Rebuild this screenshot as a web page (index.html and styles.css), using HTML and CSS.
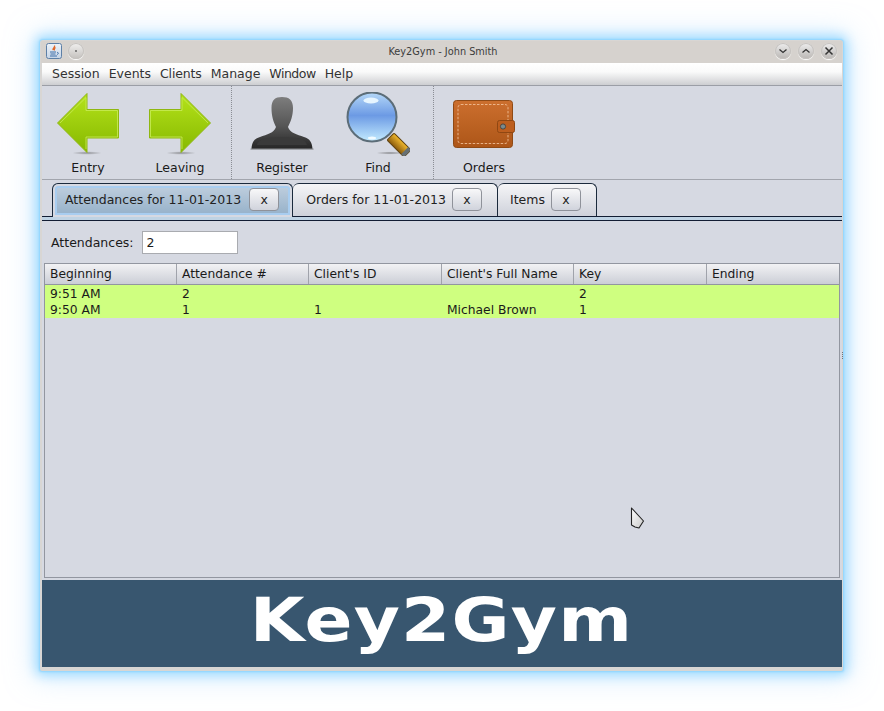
FILE: index.html
```html
<!DOCTYPE html>
<html lang="en">
<head>
<meta charset="utf-8">
<title>Key2Gym - John Smith</title>
<link rel="stylesheet" href="styles.css">
</head>
<body>
<div class="window">
  <header class="titlebar">
    <div class="title-left">
      <svg class="java" viewBox="0 0 16 16" width="16" height="16">
        <defs><linearGradient id="jbg" x1="0" y1="0" x2="0" y2="1"><stop offset="0" stop-color="#eef3f9"/><stop offset="1" stop-color="#c5d4e6"/></linearGradient></defs>
        <rect x="0.5" y="0.5" width="15" height="15" rx="2" fill="url(#jbg)" stroke="#5d7fa6"/>
        <path d="M8.5 2.5c1 1.5-2 2.5-1.500 4.500M9.500 4.500c-1.500 1-1.500 2-1 3" fill="none" stroke="#e0672a" stroke-width="1.300"/>
        <path d="M4 9h6M4.500 11h5M4 13h7M11 9.500c1.500-.5 2 1.500 0 2" fill="none" stroke="#3f6ea8" stroke-width="1"/>
      </svg>
      <span class="orb orb-small"><span class="dot"></span></span>
    </div>
    <div class="title-text">Key2Gym - John Smith</div>
    <div class="title-right">
      <span class="orb"><svg viewBox="0 0 16 16" width="16" height="16"><path d="M4.500 6.500 8 9.500l3.500-3" fill="none" stroke="#333" stroke-width="1.300"/></svg></span>
      <span class="orb"><svg viewBox="0 0 16 16" width="16" height="16"><path d="M4.500 9.500 8 6.500l3.500 3" fill="none" stroke="#333" stroke-width="1.300"/></svg></span>
      <span class="orb"><svg viewBox="0 0 16 16" width="16" height="16"><path d="M4.500 4.500l7 7M11.500 4.500l-7 7" fill="none" stroke="#333" stroke-width="1.500"/></svg></span>
    </div>
  </header>

  <nav class="menubar">
    <span>Session</span><span>Events</span><span class="snug">Clients</span><span>Manage</span><span class="tight">Window</span><span>Help</span>
  </nav>

  <div class="toolbar">
    <div class="tool">
      <svg viewBox="0 0 64 64" width="64" height="64">
        <defs>
          <linearGradient id="ga" x1="0" y1="0" x2="0" y2="1"><stop offset="0" stop-color="#b5e31a"/><stop offset="1" stop-color="#86b800"/></linearGradient>
          <radialGradient id="sh"><stop offset="0" stop-color="#555" stop-opacity=".55"/><stop offset="1" stop-color="#555" stop-opacity="0"/></radialGradient>
        </defs>
        <ellipse cx="31" cy="61" rx="15" ry="1.800" fill="url(#sh)"/>
        <path d="M1.500 31 31 1.500V17.500H62.500V46H31V60.500Z" fill="url(#ga)" stroke="#8fb711"/>
        <path d="M4 31 30 5.500V18.500H61.500V45H30V57" fill="none" stroke="#c9ec5a" stroke-width=".8"/>
      </svg>
      <span>Entry</span>
    </div>
    <div class="tool">
      <svg viewBox="0 0 64 64" width="64" height="64">
        <defs><linearGradient id="gb" x1="0" y1="0" x2="0" y2="1"><stop offset="0" stop-color="#b5e31a"/><stop offset="1" stop-color="#86b800"/></linearGradient>
        <radialGradient id="sh2"><stop offset="0" stop-color="#555" stop-opacity=".55"/><stop offset="1" stop-color="#555" stop-opacity="0"/></radialGradient></defs>
        <ellipse cx="33" cy="61" rx="15" ry="1.800" fill="url(#sh2)"/>
        <path d="M62.500 31 33 1.500V17.500H1.500V46H33V60.500Z" fill="url(#gb)" stroke="#8fb711"/>
        <path d="M60 31 34 5.500V18.500H2.500V45H34V57" fill="none" stroke="#c9ec5a" stroke-width=".8"/>
      </svg>
      <span>Leaving</span>
    </div>
    <div class="sep sep-a"></div>
    <div class="tool">
      <svg viewBox="0 0 64 64" width="64" height="64">
        <defs><linearGradient id="gp" x1="0" y1="0" x2="0" y2="1"><stop offset="0" stop-color="#7d7d7d"/><stop offset=".55" stop-color="#565656"/><stop offset="1" stop-color="#262626"/></linearGradient></defs>
        <path d="M1.500 57C2 50 4 47 10 45 17 42.500 24 41 26 35 23.500 30 21.500 24 21.500 16 21.500 8 25 5 32 5s11 3 11 11C43 24 40.500 30 38 35 40 41 47 42.500 54 45 60 47 62 50 62.500 57Z" fill="url(#gp)"/>
        <path d="M7 53C8 49 12 47 17 46 24 45 40 45 47 46 52 47 56 49 57 53Z" fill="#3a3a3a"/>
        <rect x="0.500" y="56.500" width="63" height="1.200" fill="#8b8d92"/>
      </svg>
      <span>Register</span>
    </div>
    <div class="tool tool-find">
      <svg viewBox="0 0 64 64" width="64" height="64">
        <defs>
          <linearGradient id="lens" x1="0" y1="0" x2="0" y2="1"><stop offset="0" stop-color="#b5d8f8"/><stop offset=".47" stop-color="#6c9ae4"/><stop offset="1" stop-color="#c4ecff"/></linearGradient>
          <linearGradient id="hd" x1="0" y1="0" x2="0" y2="1"><stop offset="0" stop-color="#f3bb2e"/><stop offset="1" stop-color="#8a5a0c"/></linearGradient>
          <radialGradient id="sh3"><stop offset="0" stop-color="#555" stop-opacity=".6"/><stop offset="1" stop-color="#555" stop-opacity="0"/></radialGradient>
        </defs>
        <ellipse cx="44" cy="61" rx="14" ry="1.600" fill="url(#sh3)"/>
        <g transform="rotate(45 53 53)">
          <rect x="41" y="48" width="24" height="10" rx="1.500" fill="url(#hd)" stroke="#5e4210"/>
          <rect x="61" y="48" width="4" height="10" fill="#667074"/>
        </g>
        <circle cx="26" cy="25" r="24.500" fill="url(#lens)" stroke="#5c6d78" stroke-width="2"/>
        <ellipse cx="25" cy="8.500" rx="7.500" ry="3" fill="#e6f5ff"/>
        <ellipse cx="26" cy="46" rx="4" ry="1.500" fill="#f2fbff"/>
      </svg>
      <span>Find</span>
    </div>
    <div class="sep sep-b"></div>
    <div class="tool">
      <svg viewBox="0 0 64 64" width="64" height="64">
        <defs><linearGradient id="wl" x1="0" y1="0" x2="0" y2="1"><stop offset="0" stop-color="#cc6f2e"/><stop offset="1" stop-color="#ad5618"/></linearGradient></defs>
        <rect x="1.500" y="8.500" width="59" height="47" rx="3" fill="url(#wl)" stroke="#8f4a15"/>
        <rect x="6" y="12.500" width="50" height="39" rx="3" fill="none" stroke="#efbd95" stroke-width=".9" stroke-dasharray="2.500 1.500"/>
        <rect x="45.500" y="28.500" width="17" height="12" rx="2" fill="#bd5e1e" stroke="#8f4712"/>
        <circle cx="51" cy="34.500" r="2.600" fill="#7b8a8c" stroke="#3b3b3b" stroke-width=".8"/>
      </svg>
      <span>Orders</span>
    </div>
  </div>

  <div class="tabs">
    <div class="tab tab-active"><span>Attendances for 11-01-2013</span><button class="close">x</button></div>
    <div class="tab tab-orders"><span>Orders for 11-01-2013</span><button class="close">x</button></div>
    <div class="tab tab-items"><span>Items</span><button class="close">x</button></div>
  </div>
  <div class="tabline"></div>

  <main class="content">
    <div class="count-row">
      <label for="cnt">Attendances:</label>
      <input id="cnt" class="count" value="2">
    </div>
    <div class="table">
      <div class="thead">
        <div>Beginning</div><div>Attendance #</div><div>Client's ID</div><div>Client's Full Name</div><div>Key</div><div>Ending</div>
      </div>
      <div class="tbody">
        <div class="trow"><div>9:51 AM</div><div>2</div><div></div><div></div><div>2</div><div></div></div>
        <div class="trow"><div>9:50 AM</div><div>1</div><div>1</div><div>Michael Brown</div><div>1</div><div></div></div>
      </div>
    </div>
  </main>

  <footer class="banner"><span class="logo">Key2Gym</span></footer>

  <span class="grip"></span>
  <svg class="cursor" viewBox="0 0 16 22" width="16" height="22">
    <defs><linearGradient id="cr" x1="0" y1="0" x2="1" y2="1"><stop offset="0" stop-color="#fff"/><stop offset="1" stop-color="#c9c9c9"/></linearGradient></defs>
    <path d="M1.500 1V18L5 20 9 21 13.500 14Z" fill="url(#cr)" stroke="#222" stroke-width="1.100" stroke-linejoin="round"/>
  </svg>
</div>
</body>
</html>
```
FILE: styles.css
```css
html, body { margin: 0; padding: 0; background: #fff; }
body {
  width: 884px;
  height: 711px;
  padding: 40px 0 0 40px;
  box-sizing: border-box;
  overflow: hidden;
  font-family: "DejaVu Sans", sans-serif;
  font-size: 12.5px;
  color: #1a1a1a;
}
.window {
  position: relative;
  width: 803px;
  height: 631px;
  box-sizing: border-box;
  display: flex;
  flex-direction: column;
  background: #d6d9e2;
  border: solid #d8d6d4;
  border-width: 1px 1px 4px 2px;
  border-radius: 3px 3px 2px 2px;
  box-shadow: 0 0 2px 1px #8fd6ff, 0 0 12px 4px #9edbff, 0 0 28px 6px rgba(170, 215, 255, .5);
}
.titlebar {
  height: 22px;
  flex: none;
  display: flex;
  align-items: center;
  justify-content: space-between;
  box-sizing: border-box;
  background: #d6d2ce;
  position: relative;
  padding: 0 5px 2px 5px;
  margin-left: -1px;
}
.title-left, .title-right { display: flex; align-items: center; gap: 7px; }
.title-left { gap: 6px; }
.title-text {
  position: absolute;
  left: 3px; right: 0;
  text-align: center;
  font-size: 9.750px;
  color: #3c3c3c;
}
.orb {
  width: 16px; height: 16px;
  border-radius: 50%;
  background: linear-gradient(#eeeeee, #b9b6b3);
  box-shadow: inset 0 0 0 1px #c6c3c0, 0 1px 1px #fff;
  display: flex; align-items: center; justify-content: center;
}
.orb-small { background: linear-gradient(#f1f0ef, #c3c0bd); }
.dot { width: 2px; height: 2px; border-radius: 50%; background: #666; }

.menubar {
  height: 23px;
  flex: none;
  box-sizing: border-box;
  display: flex;
  align-items: center;
  gap: 9px;
  padding: 0 0 2px 10px;
  font-size: 12.500px;
  color: #333;
  background: linear-gradient(#ffffff 0%, #fafafa 40%, #cdced1 100%);
  border-bottom: 1px solid #9b9ea6;
}
.snug { letter-spacing: -.15px; }
.tight { letter-spacing: -.5px; }

.toolbar {
  height: 94px;
  flex: none;
  box-sizing: border-box;
  display: flex;
  border-bottom: 1px solid #a2a5ad;
}
.tool {
  width: 92px;
  flex: none;
  display: flex;
  flex-direction: column;
  align-items: center;
  padding-top: 6px;
  box-sizing: border-box;
}
.tool span { margin-top: 4px; line-height: 16px; }
.tool-find { margin-left: 4px; }
.sep { width: 0; border-left: 1px dotted #8a8d94; flex: none; }
.sep-a { margin: 0 4px 0 5px; }
.sep-b { margin: 0 4px 0 9px; }

.tabs {
  flex: none;
  height: 33px;
  margin-top: 3px;
  padding-left: 10px;
  display: flex;
  align-items: stretch;
  box-sizing: border-box;
  position: relative;
  z-index: 1;
}
.tab {
  display: flex;
  align-items: center;
  gap: 6px;
  padding: 0 15px 1px 13px;
  box-sizing: border-box;
  border: 1px solid #1b2a3c;
  border-bottom: 0;
  border-left-width: 0;
  border-radius: 6px 6px 0 0;
  background: linear-gradient(#f5f5f7, #ced1da);
  color: #222;
}
.tab-active {
  border-left-width: 1px;
  gap: 8px;
  padding: 0 13px 2px 12px;
  margin-bottom: -1px;
  background: linear-gradient(#c1d0df, #93afc8);
  box-shadow: inset 0 0 0 2px #d6d9e2, inset 0 0 0 4px #a8cdf0;
}
.tab-items { padding-left: 12px; }
.close {
  width: 30px;
  height: 23px;
  padding: 0;
  box-sizing: border-box;
  font: inherit;
  color: #222;
  border: 1px solid #8f929a;
  border-radius: 4px;
  background: linear-gradient(#f8f8f9, #d0d3dc);
}
.tabline {
  flex: none;
  height: 5px;
  box-sizing: border-box;
  background: #bfd3e4;
  border-top: 1px solid #121d33;
  border-bottom: 1px solid #121d33;
}

.content {
  flex: 1;
  min-height: 0;
  display: flex;
  flex-direction: column;
  padding: 0 2px 2px 2px;
}
.count-row {
  height: 42px;
  flex: none;
  display: flex;
  align-items: center;
  gap: 8px;
  padding: 0 0 0 7px;
}
.count {
  width: 96px;
  height: 23px;
  box-sizing: border-box;
  border: 1px solid #a9abb0;
  background: #fff;
  font: inherit;
  color: #1a1a1a;
  padding: 0 4px;
  outline: 0;
}
.table {
  flex: 1;
  border: 1px solid #9296a0;
  min-height: 0;
  font-size: 12.300px;
}
.thead, .trow {
  display: grid;
  grid-template-columns: 132px 132px 133px 132px 133px 1fr;
}
.thead {
  height: 21px;
  box-sizing: border-box;
  background: linear-gradient(#f2f2f4, #cbced6);
  border-bottom: 1px solid #9296a0;
  line-height: 20px;
}
.thead div {
  padding-left: 5px;
  border-right: 1px solid #a0a3ab;
}
.thead div:last-child { border-right: 0; }
.tbody {
  padding-top: 1px;
  background: #cfff80;
}
.trow {
  height: 16px;
  line-height: 16px;
}
.trow div { padding-left: 5px; }
.banner {
  flex: none;
  height: 87px;
  background: #38566f;
  display: flex;
  align-items: center;
  justify-content: center;
}
.logo {
  font-family: "DejaVu Sans", sans-serif;
  font-weight: 700;
  font-size: 60px;
  line-height: 1;
  letter-spacing: 1px;
  margin: 0 2px 7px 0;
  color: #fff;
  transform: scaleX(1.180);
}
.grip {
  position: absolute;
  right: -1px;
  top: 311px;
  height: 7px;
  border-right: 1px dotted #70747c;
}
.cursor {
  position: absolute;
  left: 588px;
  top: 466px;
}
```
